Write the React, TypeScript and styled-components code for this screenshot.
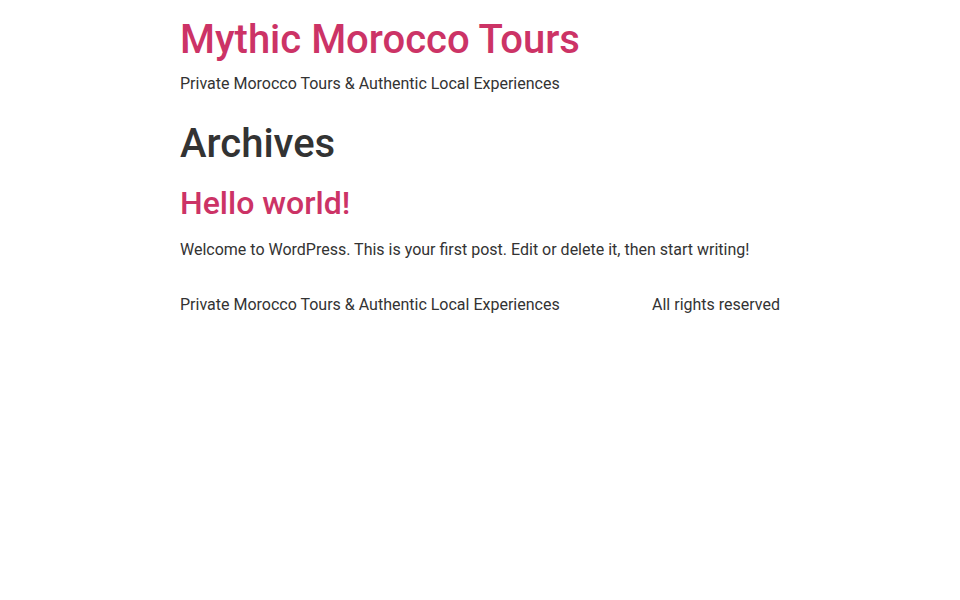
import React from "react";
import styled, { createGlobalStyle } from "styled-components";

const Global = createGlobalStyle`
  html, body { margin: 0; padding: 0; background: #fff; }
  body {
    font-family: Roboto, "Noto Sans", "Liberation Sans", sans-serif;
    font-size: 16px;
    line-height: 1.5;
    color: #333;
    -webkit-font-smoothing: antialiased;
  }
  * { box-sizing: border-box; }
`;

const Container = styled.div`
  max-width: 600px;
  margin: 0 auto;
`;

const Header = styled.header`
  padding: 16px 0 24px;
`;

const SiteTitle = styled.a`
  display: block;
  font-size: 40px;
  font-weight: 500;
  line-height: 1.2;
  color: #c36;
  text-decoration: none;
  margin: 0 0 8px;
`;

const Tagline = styled.p`
  margin: 0;
  font-size: 16px;
`;

const Main = styled.main``;

const PageHeader = styled.h1`
  font-size: 40px;
  font-weight: 500;
  line-height: 1.2;
  margin: 0 0 16px;
`;

const PostTitle = styled.h2`
  font-size: 32px;
  font-weight: 500;
  line-height: 1.2;
  margin: 0 0 16px;
  a { color: #c36; text-decoration: none; }
`;

const Excerpt = styled.p`
  margin: 0 0 15px;
`;

const Footer = styled.footer`
  display: flex;
  justify-content: space-between;
  padding: 16px 0;
`;

export default function App() {
  return (
    <>
      <Global />
      <Container>
        <Header>
          <SiteTitle href="#">Mythic Morocco Tours</SiteTitle>
          <Tagline>Private Morocco Tours &amp; Authentic Local Experiences</Tagline>
        </Header>
        <Main>
          <PageHeader>Archives</PageHeader>
          <article>
            <PostTitle><a href="#">Hello world!</a></PostTitle>
            <Excerpt>Welcome to WordPress. This is your first post. Edit or delete it, then start writing!</Excerpt>
          </article>
        </Main>
        <Footer>
          <span>Private Morocco Tours &amp; Authentic Local Experiences</span>
          <span>All rights reserved</span>
        </Footer>
      </Container>
    </>
  );
}
